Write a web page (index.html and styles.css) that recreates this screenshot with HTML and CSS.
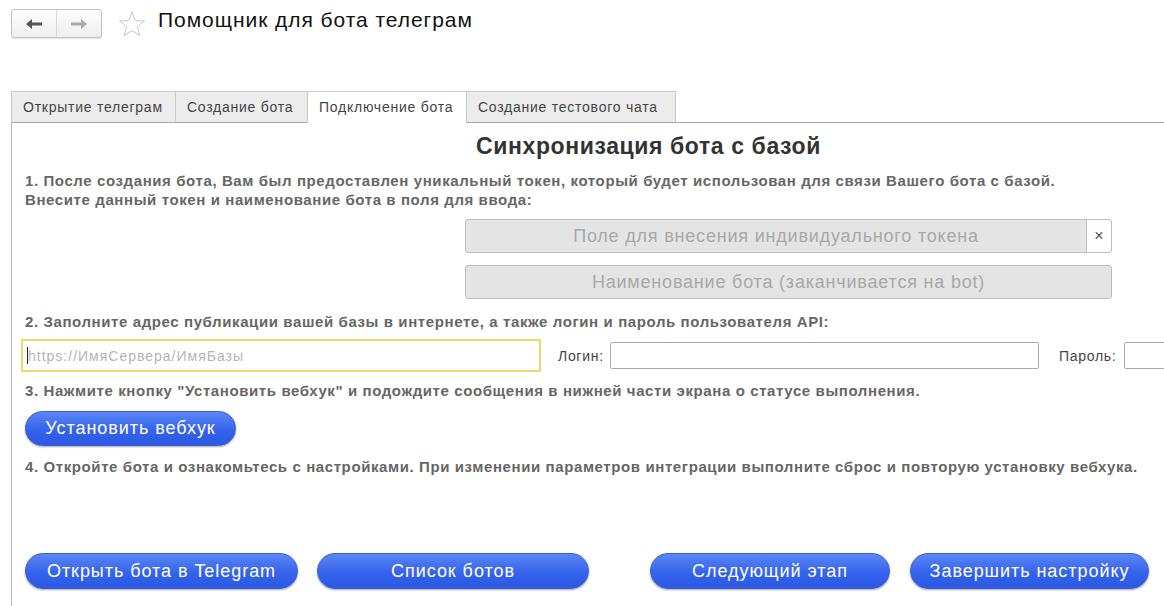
FILE: index.html
```html
<!DOCTYPE html>
<html lang="ru">
<head>
<meta charset="utf-8">
<link rel="stylesheet" href="styles.css">
</head>
<body>
<div class="header">
  <div class="navgroup">
    <div class="navbtn"><svg width="18" height="12" viewBox="0 0 18 12"><path d="M1 6 L7 1 L7 4.5 L17 4.5 L17 7.5 L7 7.5 L7 11 Z" fill="#555"/></svg></div>
    <div class="navbtn right"><svg width="18" height="12" viewBox="0 0 18 12"><path d="M17 6 L11 1 L11 4.5 L1 4.5 L1 7.5 L11 7.5 L11 11 Z" fill="#aaa"/></svg></div>
  </div>
  <svg class="star" width="28" height="28" viewBox="0 0 28 28"><path d="M14 2 L17.3 10.6 L26.5 11 L19.3 16.8 L21.8 25.7 L14 20.6 L6.2 25.7 L8.7 16.8 L1.5 11 L10.7 10.6 Z" fill="none" stroke="#c8c8c8" stroke-width="1"/></svg>
  <div class="title">Помощник для бота телеграм</div>
</div>

<div class="tabs">
  <div class="tab t1">Открытие телеграм</div>
  <div class="tab t2">Создание бота</div>
  <div class="tab t3 active">Подключение бота</div>
  <div class="tab t4">Создание тестового чата</div>
  <div class="tabfill"></div>
</div>

<div class="panel">
  <h1 class="heading">Синхронизация бота с базой</h1>
  <p class="step s1">1. После создания бота, Вам был предоставлен уникальный токен, который будет использован для связи Вашего бота с базой.<br>Внесите данный токен и наименование бота в поля для ввода:</p>
  <div class="fields">
    <div class="field token"><span class="ph">Поле для внесения индивидуального токена</span><span class="clear">×</span></div>
    <div class="field name"><span class="ph">Наименование бота (заканчивается на bot)</span></div>
  </div>
  <p class="step s2">2. Заполните адрес публикации вашей базы в интернете, а также логин и пароль пользователя API:</p>
  <div class="row">
    <div class="url"><span class="caret"></span><span class="urlph">https://ИмяСервера/ИмяБазы</span></div>
    <span class="lbl lbl-login">Логин:</span>
    <div class="inp login"></div>
    <span class="lbl lbl-pass">Пароль:</span>
    <div class="inp pass"></div>
  </div>
  <p class="step s3">3. Нажмите кнопку "Установить вебхук" и подождите сообщения в нижней части экрана о статусе выполнения.</p>
  <div class="btn webhook">Установить вебхук</div>
  <p class="step s4">4. Откройте бота и ознакомьтесь с настройками. При изменении параметров интеграции выполните сброс и повторую установку вебхука.</p>
  <div class="bottom">
    <div class="btn b1">Открыть бота в Telegram</div>
    <div class="btn b2">Список ботов</div>
    <div class="btn b3">Следующий этап</div>
    <div class="btn b4">Завершить настройку</div>
  </div>
</div>
</body>
</html>
```
FILE: styles.css
```css
* { box-sizing: border-box; }
html, body { margin: 0; padding: 0; background: #fff; overflow: hidden; }
body {
  width: 1164px; height: 606px;
  font-family: "Liberation Sans", Arial, sans-serif;
  color: #555;
}
.header {
  display: flex; align-items: center;
  height: 42px; padding: 5px 0 0 11px;
}
.navgroup {
  display: flex; width: 91px; height: 29px;
  border: 1px solid #c4c4c4; border-radius: 3px;
  background: linear-gradient(#fdfdfd, #eeeeee);
  box-shadow: 0 1px 1px rgba(0,0,0,0.12);
}
.navbtn { flex: 1; display: flex; align-items: center; justify-content: center; }
.navbtn.right { border-left: 1px solid #d6d6d6; }
.star { margin-left: 16px; }
.title {
  margin-left: 12px; font-size: 21px; letter-spacing: 0.95px; color: #111;
  margin-top: -7px;
}
.tabs {
  display: flex; margin-top: 49px; padding-left: 11px; height: 32px;
}
.tab {
  height: 32px; padding: 0 11px; line-height: 30px;
  font-size: 14px; letter-spacing: 0.75px; color: #444; white-space: nowrap;
  background: #ececec; border: 1px solid #c8c8c8; border-right: none;
  border-bottom: 1px solid #a8a8a8;
}
.tab.t1 { width: 164px; }
.tab.t2 { width: 132px; }
.tab.t3 { width: 159px; }
.tab.t4 { width: 210px; border-right: 1px solid #c8c8c8; }
.tab.active { background: #fff; border-bottom-color: #fff; }
.tabfill { flex: 1; border-bottom: 1px solid #a8a8a8; }
.panel {
  margin-left: 11px; border-left: 1px solid #b8b8b8;
  height: 500px; padding-left: 13px;
}
.heading {
  margin: 0; padding-top: 10px; height: 48px;
  text-align: center; font-size: 23px; letter-spacing: 0.6px; font-weight: bold; color: #333;
  padding-left: 108px; white-space: nowrap;
}
.step {
  margin: 0; font-size: 15px; letter-spacing: 0.6px; font-weight: bold; color: #666;
  line-height: 19px; white-space: nowrap;
}
.fields {
  display: flex; flex-direction: column; gap: 12px;
  padding-left: 440px; margin-top: 10px;
}
.field {
  position: relative; width: 647px; height: 34px;
  background: #e4e4e4; border: 1px solid #bdbdbd; border-radius: 3px;
  display: flex; align-items: center;
}
.field .ph { flex: 1; text-align: center; color: #a8a8a8; font-size: 18px; letter-spacing: 0.8px; white-space: nowrap; }
.field .clear {
  width: 25px; height: 32px; background: #fff; border-left: 1px solid #bdbdbd;
  border-radius: 0 3px 3px 0;
  display: flex; align-items: center; justify-content: center;
  color: #555; font-size: 16px;
}
.s2 { margin-top: 13px; }
.row { display: flex; align-items: center; margin-top: 8px; margin-left: -4px; height: 33px; }
.row > * { flex-shrink: 0; }
.url {
  width: 520px; height: 33px; border: 2px solid #eed86a; display: flex; align-items: center;
  padding-left: 4px;
}
.caret { width: 1px; height: 17px; background: #222; }
.urlph { color: #b4b4b4; font-size: 14px; letter-spacing: 1px; white-space: nowrap; }
.lbl { font-size: 14px; letter-spacing: 0.7px; color: #444; white-space: nowrap; }
.lbl-login { margin-left: 17px; width: 46px; }
.inp { height: 27px; border: 1px solid #a9a9a9; border-radius: 2px; background: #fff; }
.login { width: 429px; margin-left: 6px; }
.lbl-pass { margin-left: 20px; width: 59px; }
.pass { width: 60px; margin-left: 6px; }
.s3 { margin-top: 9px; }
.btn {
  display: flex; align-items: center; justify-content: center;
  height: 35px; border-radius: 18px; color: #fff; font-size: 18px; letter-spacing: 0.95px;
  white-space: nowrap;
  background: linear-gradient(#5a87f5 0%, #3563ec 55%, #2c57e2 100%);
  border: 1px solid #3a5fd0;
  box-shadow: 0 1px 2px rgba(0,0,0,0.35);
}
.webhook { width: 211px; margin-top: 11px; }
.s4 { margin-top: 11px; }
.bottom { display: flex; margin-top: 77px; }
.bottom .btn { height: 36px; }
.b1 { width: 273px; }
.b2 { width: 272px; margin-left: 19px; }
.b3 { width: 240px; margin-left: 61px; }
.b4 { width: 239px; margin-left: 20px; }
```
